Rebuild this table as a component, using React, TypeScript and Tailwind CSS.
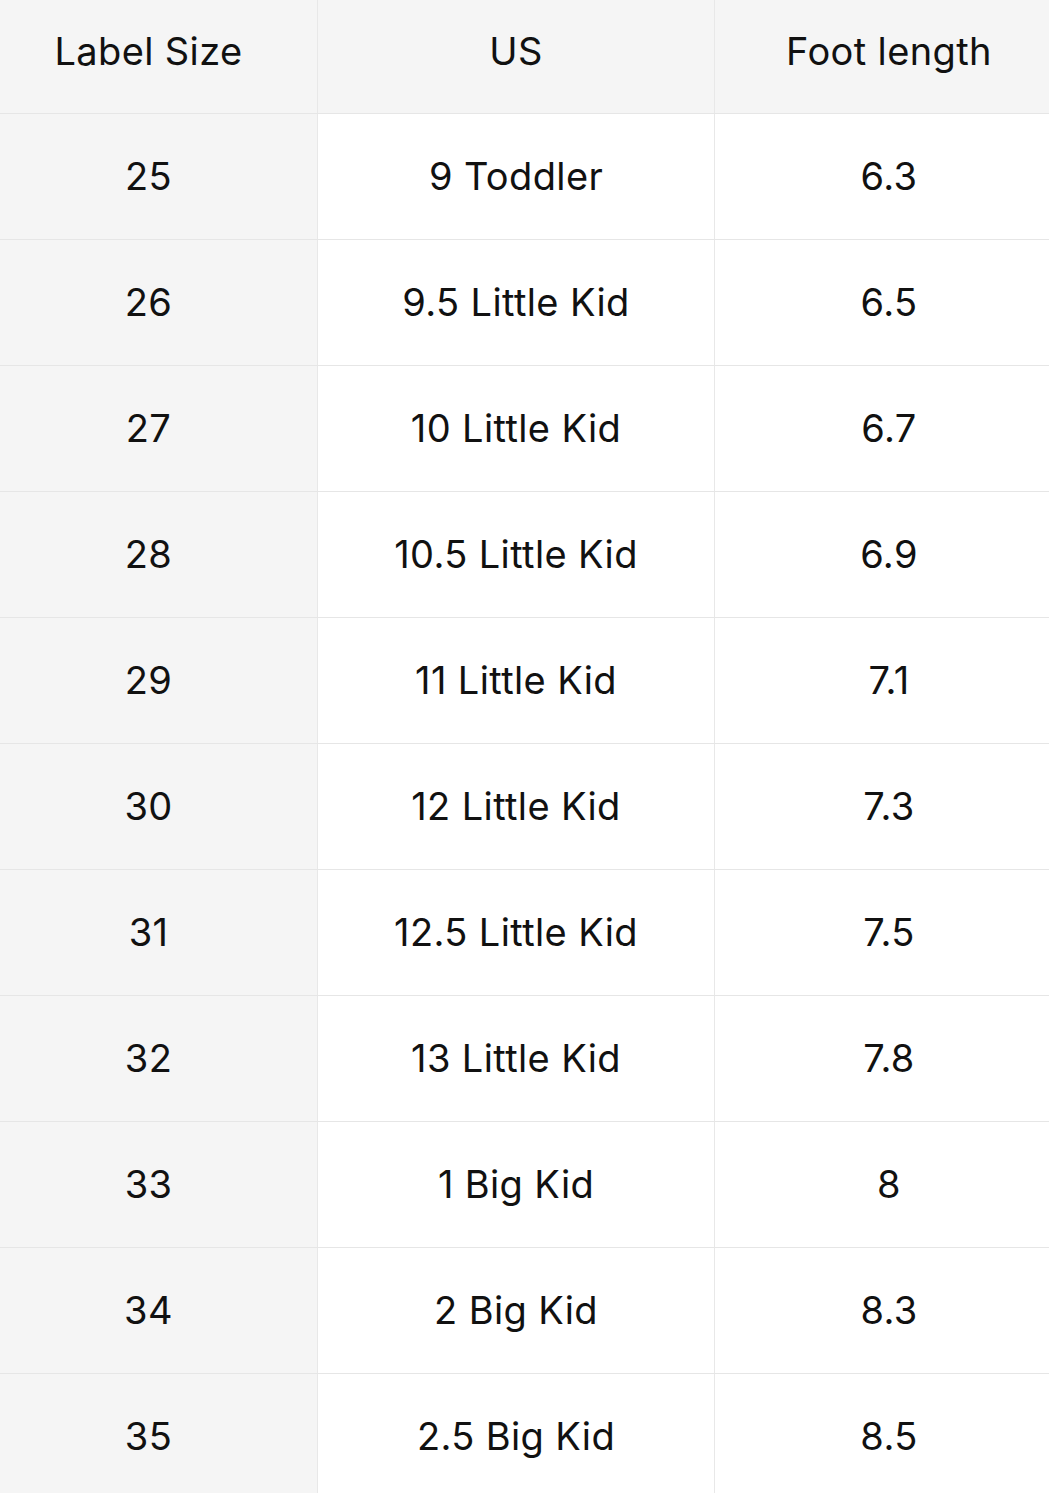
const rows: [string, string, string][] = [
  ['25', '9 Toddler', '6.3'],
  ['26', '9.5 Little Kid', '6.5'],
  ['27', '10 Little Kid', '6.7'],
  ['28', '10.5 Little Kid', '6.9'],
  ['29', '11 Little Kid', '7.1'],
  ['30', '12 Little Kid', '7.3'],
  ['31', '12.5 Little Kid', '7.5'],
  ['32', '13 Little Kid', '7.8'],
  ['33', '1 Big Kid', '8'],
  ['34', '2 Big Kid', '8.3'],
  ['35', '2.5 Big Kid', '8.5'],
]

export default function App() {
  return (
    <div className="w-[1049px] bg-white text-[#111] font-['Inter','Liberation_Sans',sans-serif] text-[38px] tracking-[0.01em]">
      <div className="grid grid-cols-[318px_397px_1fr] h-[114px] bg-[#f5f5f5] border-b border-[#e6e6e6]">
        <div className="flex items-center justify-center pb-[10px] pr-[20px] border-r border-[#e8e8e8]">Label Size</div>
        <div className="flex items-center justify-center pb-[10px] border-r border-[#e8e8e8]">US</div>
        <div className="flex items-center justify-center pb-[10px] pl-[14px]">Foot length</div>
      </div>
      {rows.map(([label, us, foot]) => (
        <div key={label} className="grid grid-cols-[318px_397px_1fr] h-[126px] border-b border-[#e6e6e6]">
          <div className="flex items-center justify-center pr-[20px] bg-[#f5f5f5] border-r border-[#e8e8e8]">{label}</div>
          <div className="flex items-center justify-center border-r border-[#e8e8e8]">{us}</div>
          <div className="flex items-center justify-center pl-[14px]">{foot}</div>
        </div>
      ))}
    </div>
  )
}
